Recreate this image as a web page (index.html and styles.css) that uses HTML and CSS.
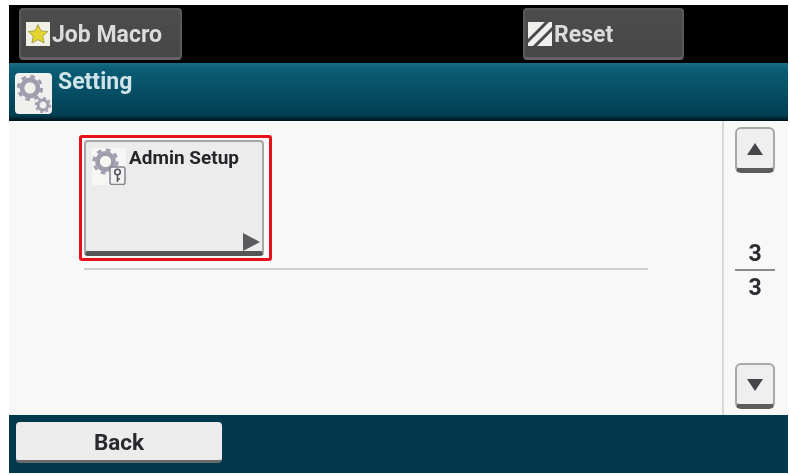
FILE: index.html
```html
<!DOCTYPE html>
<html lang="en">
<head>
<meta charset="utf-8">
<title>Setting</title>
<link rel="stylesheet" href="styles.css">
</head>
<body>
<svg class="defs" width="0" height="0" aria-hidden="true">
  <defs>
    <g id="gear">
      <circle cx="0" cy="0" r="8.400" fill="none" stroke="#a09eae" stroke-width="4"/>
      <circle cx="0" cy="0" r="11.600" fill="none" stroke="#a09eae" stroke-width="3" stroke-dasharray="4.550 4.560"/>
      <circle cx="0" cy="0" r="6.200" fill="none" stroke="#7d7b86" stroke-width=".8"/>
    </g>
  </defs>
</svg>
<div class="screen">
  <header class="topbar">
    <div class="dark-btn macro-btn">
      <svg class="top-icon" viewBox="0 0 24 24"><rect width="24" height="24" fill="#f1f0e6"/><path d="M12 2.500l2.900 6.300 6.800.8-5 4.600 1.400 6.800-6.100-3.400-6.100 3.400 1.400-6.800-5-4.600 6.800-.8z" fill="#e2d32e" stroke="#a9a545" stroke-width="1"/></svg>
      <span>Job Macro</span>
    </div>
    <div class="dark-btn reset-btn">
      <svg class="top-icon" viewBox="0 0 24 24"><rect width="24" height="24" fill="#f0f0ee"/><path d="M-1 20L20-1M5 26L26 5" stroke="#4a4a4a" stroke-width="3"/></svg>
      <span>Reset</span>
    </div>
  </header>
  <div class="titlebar">
    <div class="title-icon">
      <svg viewBox="0 0 36 40" width="36" height="40"><use href="#gear" transform="translate(14 14)"/><use href="#gear" transform="translate(27 31) scale(.62)"/></svg>
    </div>
    <h1>Setting</h1>
  </div>
  <main class="content">
    <section class="list">
      <div class="highlight">
        <div class="tile">
          <svg class="tile-icon" viewBox="0 0 34 37">
            <rect width="34" height="37" fill="#f6f6f5"/>
            <use href="#gear" transform="translate(13.500 13.500)"/>
            <rect x="18" y="19" width="15" height="17.500" rx="2" fill="#f2f2f2" stroke="#85838c" stroke-width="1.500"/>
            <circle cx="25.500" cy="24" r="2.800" fill="none" stroke="#55535c" stroke-width="1.600"/>
            <path d="M25.500 26.500v7.500M25.500 31h2.500" stroke="#55535c" stroke-width="1.600"/>
          </svg>
          <span class="tile-label">Admin Setup</span>
          <i class="tile-arrow"></i>
        </div>
      </div>
      <div class="rule"></div>
    </section>
    <aside class="pager">
      <div class="page-btn"><i class="tri up"></i></div>
      <div class="count"><span>3</span><b></b><span>3</span></div>
      <div class="page-btn"><i class="tri down"></i></div>
    </aside>
  </main>
  <footer class="bottombar">
    <div class="back-btn">Back</div>
  </footer>
</div>
</body>
</html>
```
FILE: styles.css
```css
* { box-sizing: border-box; }
html, body { margin: 0; height: 100%; background: #fff; overflow: hidden; }
body { padding: 5px 2px 2px 9px; font-family: "Roboto", "Liberation Sans", sans-serif; font-weight: 700; }
.defs { position: absolute; }
.screen { width: 779px; height: 468px; display: flex; flex-direction: column; filter: blur(.6px); }

.topbar { height: 58px; background: #000; display: flex; padding: 3px 0 0 10px; flex: none; }
.dark-btn {
  width: 163px; height: 52px; display: flex; align-items: center; gap: 2px;
  padding: 1px 0 0 5px; margin-right: 341px;
  background: linear-gradient(#4c4c4c, #474747);
  border: 2px solid #5a5a5a; border-bottom: 3px solid #6a6262; border-radius: 4px;
  color: #dcdcdc; font-size: 23px; font-weight: 700;
}
.reset-btn { margin: 0; width: 161px; padding-left: 3px; }
.top-icon { width: 24px; height: 24px; flex: none; }

.titlebar {
  height: 58px; flex: none; display: flex; align-items: flex-start; padding: 10px 0 0 6px; gap: 6px;
  background: linear-gradient(#186f86 0, #0a5d75 6px, #07566c 30%, #023f52 90%, #012530 96%, #000e14 100%);
}
.title-icon {
  width: 37px; height: 41px; background: #f0f0ef; border-radius: 4px;
  display: flex; align-items: center; justify-content: center;
}
.titlebar h1 { margin: -6px 0 0; font-size: 23px; font-weight: 700; color: #cfe3e8; line-height: 30px; }

.content { flex: 1; display: flex; background: #f8f8f8; min-height: 0; }
.list { width: 715px; flex: none; padding: 14px 0 0 70px; border-right: 2px solid #d9d9d9; }
.highlight {
  width: 193px; height: 126px; border: 3px solid #e8101a; border-radius: 3px; padding: 2px 5px 2px 2px;
  background: #f8f8f8;
}
.tile {
  position: relative; width: 100%; height: 100%; display: flex; align-items: flex-start;
  padding: 6px 0 0 6px; gap: 3px;
  background: #ececec; border: 2px solid #a6a6a6; border-bottom: 5px solid #555; border-radius: 4px;
}
.tile-icon { width: 34px; height: 37px; flex: none; }
.tile-label { font-size: 19px; color: #26262a; line-height: 20px; }
.tile-arrow {
  position: absolute; right: 2px; bottom: 0; width: 0; height: 0;
  border-left: 17px solid #5a5a5f; border-top: 9.500px solid transparent; border-bottom: 9.500px solid transparent;
}
.rule { width: 564px; height: 2px; margin: 7px 0 0 5px; background: #cfcfcf; }

.pager {
  flex: 1; display: flex; flex-direction: column; align-items: flex-start;
  padding: 6px 0 6px 11px; justify-content: space-between;
}
.page-btn {
  width: 40px; height: 46px; display: flex; align-items: center; justify-content: center;
  background: #efefef; border: 2px solid #a8a8a8; border-bottom: 5px solid #5c5c5c; border-radius: 6px;
}
.tri { width: 0; height: 0; border-left: 8px solid transparent; border-right: 8px solid transparent; }
.tri.up { border-bottom: 12px solid #45454a; }
.tri.down { border-top: 12px solid #45454a; }
.count {
  width: 40px; display: flex; flex-direction: column; align-items: center;
  color: #2b2b30; font-size: 23px; line-height: 24px; margin-top: 6px;
}
.count b { width: 40px; height: 2px; background: #8a8a8a; margin: 3px 0 5px; }

.bottombar { height: 58px; flex: none; background: #01384c; padding: 7px 0 0 7px; }
.back-btn {
  width: 206px; height: 41px; display: flex; align-items: center; justify-content: center;
  background: #ececec; border-bottom: 3px solid #6a6a6a; border-radius: 4px;
  color: #2a2a2e; font-size: 22.500px; font-weight: 700; padding-top: 2px;
}
```
